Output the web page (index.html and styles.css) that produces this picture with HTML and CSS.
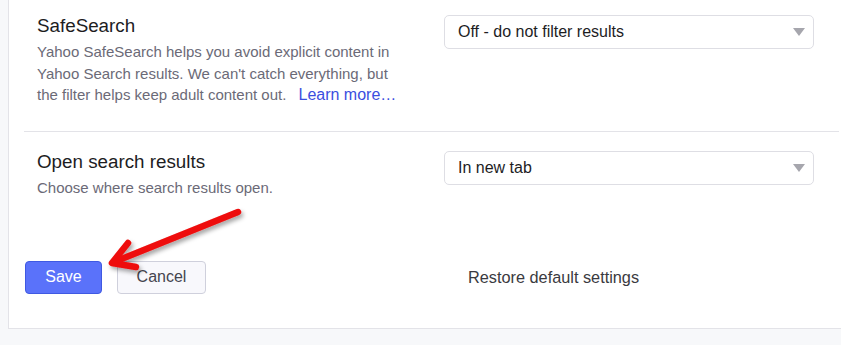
FILE: index.html
```html
<!DOCTYPE html>
<html lang="en">
<head>
<meta charset="utf-8">
<title>Search settings</title>
<link rel="stylesheet" href="styles.css">
</head>
<body>
<div class="panel">
  <div class="setting first">
    <div class="info">
      <h2 class="title">SafeSearch</h2>
      <p class="desc">Yahoo SafeSearch helps you avoid explicit content in Yahoo Search results. We can't catch everything, but the filter helps keep adult content out. <a class="link" href="#">Learn more…</a></p>
    </div>
    <div class="select">
      <span class="select-text">Off - do not filter results</span>
      <span class="caret"></span>
    </div>
  </div>
  <div class="setting second">
    <div class="info">
      <h2 class="title">Open search results</h2>
      <p class="desc">Choose where search results open.</p>
    </div>
    <div class="select">
      <span class="select-text">In new tab</span>
      <span class="caret"></span>
    </div>
  </div>
  <div class="actions">
    <div class="buttons">
      <button class="btn btn-primary">Save</button>
      <button class="btn btn-secondary">Cancel</button>
    </div>
    <a class="restore" href="#">Restore default settings</a>
  </div>
  <svg class="arrow" width="841" height="345" viewBox="0 0 841 345" aria-hidden="true">
    <defs>
      <filter id="sh" x="-20%" y="-20%" width="140%" height="140%">
        <feDropShadow dx="2" dy="3" stdDeviation="2" flood-color="#000" flood-opacity="0.35"/>
      </filter>
    </defs>
    <g filter="url(#sh)" stroke="#ee0a0a" stroke-width="6.5" stroke-linecap="round" stroke-linejoin="round" fill="none">
      <line x1="238" y1="212" x2="114" y2="262"/>
      <polyline points="128,243 112,263 136,267"/>
    </g>
  </svg>
</div>
</body>
</html>
```

FILE: styles.css
```css
* {
  box-sizing: border-box;
}

html, body {
  margin: 0;
  padding: 0;
}

body {
  background: #f7f8fa;
  font-family: "Liberation Sans", Arial, sans-serif;
  width: 841px;
  height: 345px;
  overflow: hidden;
}

.panel {
  position: relative;
  margin-left: 8px;
  width: 860px;
  height: 329px;
  background: #ffffff;
  border-left: 1px solid #e3e3e8;
  border-bottom: 1px solid #e3e3e8;
}

.setting {
  display: grid;
  grid-template-columns: 407px 370px;
  margin-left: 15px;
  width: 815px;
  padding-left: 13px;
}

.setting.first {
  padding-top: 15px;
  height: 132px;
  border-bottom: 1px solid #e3e3e8;
}

.setting.second {
  padding-top: 19px;
}

.title {
  margin: 0;
  font-size: 18.8px;
  line-height: 22px;
  font-weight: normal;
  color: #1d1d1f;
}

.desc {
  margin: 4px 0 0;
  width: 375px;
  font-size: 15px;
  line-height: 21.5px;
  color: #6b6a77;
}

.link {
  color: #3b4ee0;
  text-decoration: none;
  margin-left: 8px;
  font-size: 16px;
  line-height: 20px;
  white-space: nowrap;
}

.select {
  display: flex;
  align-items: center;
  justify-content: space-between;
  height: 34px;
  padding: 0 8px 0 13px;
  border: 1px solid #dedee4;
  border-radius: 5px;
  background: #fff;
}

.select-text {
  font-size: 16px;
  color: #1d1d1f;
}

.caret {
  width: 0;
  height: 0;
  border-left: 6px solid transparent;
  border-right: 6px solid transparent;
  border-top: 8px solid #a6a6ad;
}

.actions {
  display: grid;
  grid-template-columns: 443px auto;
  align-items: center;
  margin-left: 16px;
  margin-top: 62px;
}

.buttons {
  display: flex;
  gap: 15px;
}

.btn {
  height: 33px;
  font-family: "Liberation Sans", Arial, sans-serif;
  font-size: 16px;
  border-radius: 4px;
  padding: 0;
}

.btn-primary {
  width: 77px;
  background: #5a72fa;
  border: 1px solid #3f59e2;
  color: #ffffff;
}

.btn-secondary {
  width: 89px;
  background: #f8f8fc;
  border: 1px solid #cfd0dc;
  color: #45454f;
}

.restore {
  font-size: 16.3px;
  color: #3a3a40;
  text-decoration: none;
}

.arrow {
  position: absolute;
  left: -9px;
  top: 0;
  pointer-events: none;
}
```
